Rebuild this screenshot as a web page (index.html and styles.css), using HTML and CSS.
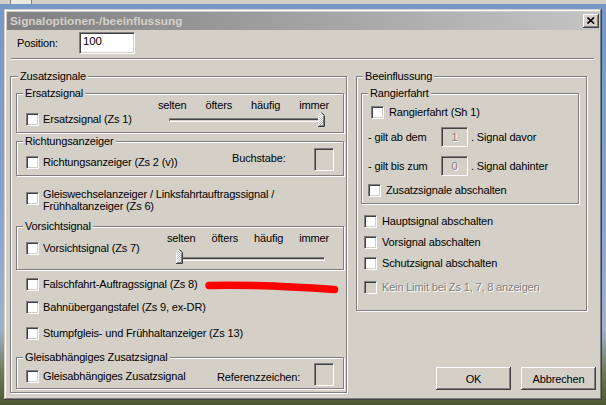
FILE: index.html
```html
<!DOCTYPE html>
<html>
<head>
<meta charset="utf-8">
<title>Signaloptionen-/beeinflussung</title>
<link rel="stylesheet" href="styles.css">
</head>
<body>
<div class="taskstrip"><span class="taskbtn"></span></div>
<div class="window">
  <div class="titlebar">
    <span class="title">Signaloptionen-/beeinflussung</span>
    <span class="closebtn"><svg width="8" height="7" viewBox="0 0 8 7"><path d="M0.5 0.5 L7 6.5 M7 0.5 L0.5 6.5" stroke="#000" stroke-width="1.7" fill="none"/></svg></span>
  </div>
  <div class="client">
    <div class="pos-row"><span class="pos-label">Position:</span><span class="field pos-input">100</span></div>
    <div class="sep"></div>
    <div class="main">
      <div class="group g-zusatz">
        <div class="legend">Zusatzsignale</div>

        <div class="group g-ersatz">
          <div class="legend l-inner">Ersatzsignal</div>
          <div class="srow">
            <div class="chk c-ersatz"><span class="cb"></span><span>Ersatzsignal (Zs 1)</span></div>
            <div class="slider s1">
              <div class="ticks"><span>selten</span><span>öfters</span><span>häufig</span><span>immer</span></div>
              <div class="track"></div>
              <svg class="thumb" width="8" height="15" viewBox="0 0 8 15"><defs><pattern id="d1" width="2" height="2" patternUnits="userSpaceOnUse"><rect width="2" height="2" fill="#fff"/><rect width="1" height="1" fill="#c0c0c0"/><rect x="1" y="1" width="1" height="1" fill="#c0c0c0"/></pattern></defs><path d="M0.5 14.5 V3.5 L3.5 0.5 L6.5 3.5 V14.5 Z" fill="url(#d1)"/><polyline points="0.5,14 0.5,3.5 3.5,0.5" fill="none" stroke="#fff"/><polyline points="3.5,0.5 6.5,3.5 6.5,14.5 0,14.5" fill="none" stroke="#404040"/><polyline points="5.5,4 5.5,13.5 1,13.5" fill="none" stroke="#808080"/></svg>
            </div>
          </div>
        </div>

        <div class="group g-richt">
          <div class="legend l-inner">Richtungsanzeiger</div>
          <div class="brow">
            <div class="chk c-richt"><span class="cb"></span><span>Richtungsanzeiger (Zs 2 (v))</span></div>
            <span class="blabel bl-buch">Buchstabe:</span>
            <span class="field box"></span>
          </div>
        </div>

        <div class="mrow">
          <span class="cb"></span>
          <span class="mtext">Gleiswechselanzeiger / Linksfahrtauftragssignal /<br>Frühhaltanzeiger (Zs 6)</span>
        </div>

        <div class="group g-vor">
          <div class="legend l-inner">Vorsichtsignal</div>
          <div class="srow">
            <div class="chk c-vor"><span class="cb"></span><span>Vorsichtsignal (Zs 7)</span></div>
            <div class="slider s2">
              <div class="ticks"><span>selten</span><span>öfters</span><span>häufig</span><span>immer</span></div>
              <div class="track"></div>
              <svg class="thumb" width="8" height="15" viewBox="0 0 8 15"><defs><pattern id="d2" width="2" height="2" patternUnits="userSpaceOnUse"><rect width="2" height="2" fill="#fff"/><rect width="1" height="1" fill="#c0c0c0"/><rect x="1" y="1" width="1" height="1" fill="#c0c0c0"/></pattern></defs><path d="M0.5 14.5 V3.5 L3.5 0.5 L6.5 3.5 V14.5 Z" fill="url(#d2)"/><polyline points="0.5,14 0.5,3.5 3.5,0.5" fill="none" stroke="#fff"/><polyline points="3.5,0.5 6.5,3.5 6.5,14.5 0,14.5" fill="none" stroke="#404040"/><polyline points="5.5,4 5.5,13.5 1,13.5" fill="none" stroke="#808080"/></svg>
            </div>
          </div>
        </div>

        <div class="chk crow r-falsch"><span class="cb"></span><span>Falschfahrt-Auftragssignal (Zs 8)</span></div>
        <div class="chk crow r-bahn"><span class="cb"></span><span>Bahnübergangstafel (Zs 9, ex-DR)</span></div>
        <div class="chk crow r-stumpf"><span class="cb"></span><span>Stumpfgleis- und Frühhaltanzeiger (Zs 13)</span></div>

        <div class="group g-gleis">
          <div class="legend l-inner">Gleisabhängiges Zusatzsignal</div>
          <div class="brow brow-gleis">
            <div class="chk c-gleis"><span class="cb"></span><span>Gleisabhängiges Zusatzsignal</span></div>
            <span class="blabel bl-ref">Referenzzeichen:</span>
            <span class="field box"></span>
          </div>
        </div>
      </div>

      <div class="rcol">
        <div class="group g-beein">
          <div class="legend">Beeinflussung</div>
          <div class="group g-rang">
            <div class="legend l-inner">Rangierfahrt</div>
            <div class="chk rchk r-rang"><span class="cb"></span><span>Rangierfahrt (Sh 1)</span></div>
            <div class="numrow nr-1"><span class="numlabel">- gilt ab dem</span><span class="field numbox">1</span><span class="numafter">. Signal davor</span></div>
            <div class="numrow nr-2"><span class="numlabel">- gilt bis zum</span><span class="field numbox">0</span><span class="numafter">. Signal dahinter</span></div>
            <div class="chk rchk r-zab"><span class="cb"></span><span>Zusatzsignale abschalten</span></div>
          </div>
          <div class="chk rchk r-haupt"><span class="cb"></span><span>Hauptsignal abschalten</span></div>
          <div class="chk rchk r-vorsig"><span class="cb"></span><span>Vorsignal abschalten</span></div>
          <div class="chk rchk r-schutz"><span class="cb"></span><span>Schutzsignal abschalten</span></div>
          <div class="chk rchk r-limit disabled"><span class="cb"></span><span>Kein Limit bei Zs 1, 7, 8 anzeigen</span></div>
        </div>
        <div class="buttons">
          <span class="btn">OK</span>
          <span class="btn">Abbrechen</span>
        </div>
      </div>
    </div>
  </div>
</div>
<svg class="redmark" width="606" height="405" viewBox="0 0 606 405"><path d="M209 285.5 C 245 284.5, 290 286.5, 334.5 289.5" stroke="#ff0000" stroke-width="7.5" stroke-linecap="round" fill="none"/></svg>
</body>
</html>
```

FILE: styles.css
```css
html, body {
  margin: 0;
  padding: 0;
}
body {
  width: 606px;
  height: 405px;
  overflow: hidden;
  position: relative;
  font-family: "Liberation Sans", Arial, sans-serif;
  font-size: 11px;
  letter-spacing: -0.15px;
  color: #000;
  background: linear-gradient(to bottom, #7698c8 0px, #86a3cd 200px, #9fb2cc 330px, #6f7a55 372px, #4c5832 405px);
}

.taskstrip {
  height: 4px;
  background: #d4d0c8;
}
.taskbtn {
  display: block;
  margin-left: 10px;
  width: 22px;
  height: 4px;
  box-sizing: border-box;
  background: #ece9e2;
  border-left: 1px solid #808080;
  border-right: 1px solid #808080;
}

.window {
  margin: 5px 0 0 4px;
  width: 598px;
  height: 391px;
  box-sizing: border-box;
  padding: 3px;
  background: #d4d0c8;
  box-shadow: inset -1px -1px #404040, inset 1px 1px #d4d0c8, inset -2px -2px #808080, inset 2px 2px #fff;
  display: flex;
  flex-direction: column;
}

.titlebar {
  height: 18px;
  flex: none;
  display: flex;
  align-items: center;
  padding-left: 3px;
  background: linear-gradient(to right, #808080, #c4c4c4);
}
.title {
  flex: 1;
  font-weight: bold;
  font-size: 11.8px;
  letter-spacing: 0;
  color: #d4d0c8;
  white-space: nowrap;
}
.closebtn {
  width: 16px;
  height: 14px;
  box-sizing: border-box;
  margin-top: -1px;
  background: #d4d0c8;
  box-shadow: inset -1px -1px #404040, inset 1px 1px #fff, inset -2px -2px #808080;
  display: flex;
  align-items: center;
  justify-content: center;
}
.closebtn svg {
  display: block;
  margin-top: -1px;
}

.client {
  flex: 1;
}

.pos-row {
  display: flex;
  align-items: center;
  margin-top: 2px;
  padding-left: 10px;
}
.pos-label {
  width: 62px;
}
.field {
  box-sizing: border-box;
  border: 1px solid;
  border-color: #808080 #fff #fff #808080;
  box-shadow: inset 1px 1px #404040, inset -1px -1px #d4d0c8;
  background: #fff;
}
.pos-input {
  width: 56px;
  height: 22px;
  padding: 1px 0 0 3px;
  line-height: 14px;
  font-size: 11.5px;
}

.sep {
  margin: 4px 0 0 4px;
  width: 583px;
  height: 0;
  border-top: 1px solid #808080;
  border-bottom: 1px solid #fff;
}

.main {
  display: flex;
  margin-top: 16px;
  margin-left: 3px;
}

.group {
  box-sizing: border-box;
  border: 1px solid #808080;
  box-shadow: inset 1px 1px #fff, 1px 1px #fff;
}
.legend {
  width: fit-content;
  margin: -8px 0 0 2px;
  padding: 0 2px;
  background: #d4d0c8;
  line-height: 14px;
  white-space: nowrap;
}
.legend.l-inner {
  margin-left: 6px;
}

.g-zusatz {
  flex: none;
  width: 337px;
  height: 317px;
  padding: 0 2px 0 5px;
}

.cb {
  flex: none;
  display: block;
  width: 13px;
  height: 13px;
  box-sizing: border-box;
  border: 1px solid;
  border-color: #808080 #fff #fff #808080;
  box-shadow: inset 1px 1px #404040, inset -1px -1px #d4d0c8;
  background: #fff;
}
.chk {
  display: flex;
  align-items: center;
  gap: 4px;
  height: 13px;
  line-height: 13px;
  white-space: nowrap;
}

/* slider groups */
.g-ersatz {
  margin-top: 10px;
  height: 40px;
}
.srow {
  display: flex;
  align-items: flex-start;
  margin-top: -2px;
  padding-left: 9px;
}
.c-ersatz {
  flex: none;
  width: 132px;
  margin-top: 15px;
}
.slider {
  position: relative;
  flex: none;
}
.ticks {
  display: flex;
  justify-content: space-between;
  line-height: 14px;
}
.track {
  box-sizing: border-box;
  height: 4px;
  border: 1px solid;
  border-color: #808080 #fff #fff #808080;
  box-shadow: inset 0 1px #404040;
  background: #d4d0c8;
}
.thumb {
  position: absolute;
  display: block;
}
.s1 {
  width: 171px;
}
.s1 .track {
  margin: 6px 0 0 11px;
  width: 154px;
}
.s1 .thumb {
  left: 160px;
  top: 14px;
}

.g-vor {
  margin-top: 14px;
  height: 44px;
}
.c-vor {
  flex: none;
  width: 141px;
  margin-top: 11px;
}
.s2 {
  width: 162px;
}
.s2 .track {
  margin: 12px 0 0 11px;
  width: 147px;
}
.s2 .thumb {
  left: 9px;
  top: 18px;
}

/* groups with a box on the right */
.g-richt {
  margin-top: 8px;
  height: 35px;
}
.brow {
  display: flex;
  align-items: flex-start;
  padding-left: 9px;
}
.c-richt {
  flex: none;
  width: 206px;
  margin-top: 8px;
}
.blabel {
  flex: none;
  line-height: 14px;
  margin-top: 3px;
  white-space: nowrap;
}
.bl-buch {
  width: 82px;
}
.box {
  flex: none;
  width: 20px;
  height: 23px;
  background: #d4d0c8;
}

.g-gleis {
  margin-top: 17px;
  height: 32px;
}
.brow-gleis {
  margin-top: -1px;
}
.c-gleis {
  flex: none;
  width: 191px;
  margin-top: 7px;
}
.bl-ref {
  width: 97px;
  margin-top: 7px;
}

/* multi-line row */
.mrow {
  display: flex;
  align-items: flex-start;
  gap: 4px;
  margin-top: 12px;
  padding-left: 10px;
}
.mrow .cb {
  margin-top: 4px;
}
.mtext {
  line-height: 12px;
  white-space: nowrap;
}

.crow {
  padding-left: 10px;
}
.r-falsch { margin-top: 8px; }
.r-bahn { margin-top: 10px; }
.r-stumpf { margin-top: 13px; }

/* right column */
.rcol {
  flex: none;
  width: 231px;
  margin-left: 9px;
  display: flex;
  flex-direction: column;
}
.g-beein {
  height: 235px;
  padding: 0 7px 0 4px;
}
.g-rang {
  margin-top: 10px;
  height: 111px;
}
.rchk {
  gap: 5px;
}
.r-rang {
  margin-top: 6px;
  padding-left: 9px;
}
.numrow {
  display: flex;
  align-items: center;
  height: 20px;
  padding-left: 6px;
  white-space: nowrap;
}
.nr-1 { margin-top: 8px; }
.nr-2 { margin-top: 9px; }
.numlabel {
  width: 73px;
}
.numbox {
  width: 27px;
  height: 20px;
  background: #d4d0c8;
  color: #808080;
  text-shadow: 1px 1px 0 #fff;
  text-align: center;
  line-height: 18px;
}
.numafter {
  margin-left: 3px;
}
.r-zab {
  margin-top: 8px;
  padding-left: 6px;
}
.r-haupt { margin-top: 11px; padding-left: 3px; }
.r-vorsig { margin-top: 8px; padding-left: 3px; }
.r-schutz { margin-top: 8px; padding-left: 3px; }
.r-limit { margin-top: 11px; padding-left: 3px; }
.disabled {
  color: #808080;
  text-shadow: 1px 1px 0 #fff;
}
.disabled .cb {
  background: #d4d0c8;
}

.buttons {
  display: flex;
  justify-content: flex-end;
  gap: 10px;
  margin-top: 56px;
  margin-right: -9px;
}
.btn {
  width: 75px;
  height: 23px;
  box-sizing: border-box;
  display: flex;
  align-items: center;
  justify-content: center;
  background: #d4d0c8;
  box-shadow: inset -1px -1px #404040, inset 1px 1px #fff, inset -2px -2px #808080;
}

.redmark {
  position: absolute;
  left: 0;
  top: 0;
  pointer-events: none;
}
```
